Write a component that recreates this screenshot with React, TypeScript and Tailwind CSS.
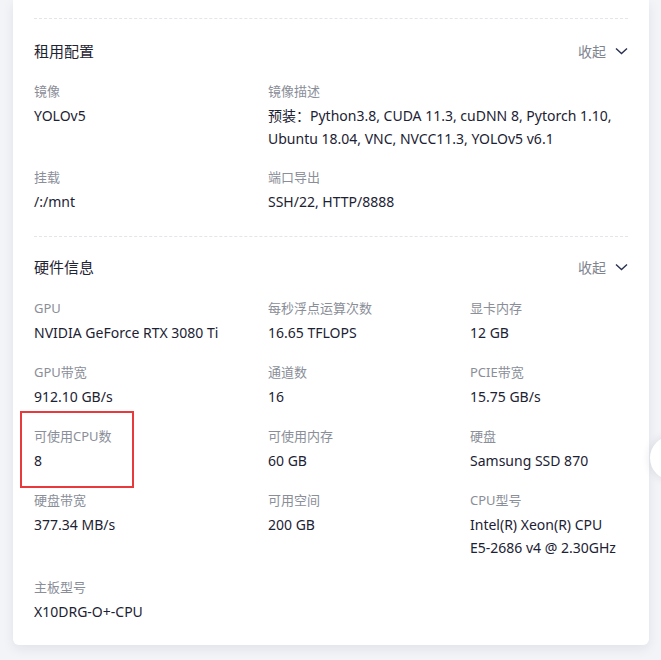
import React from "react";

type Item = { label: string; value: string[] };

const rental: Item[] = [
  { label: "镜像", value: ["YOLOv5"] },
  {
    label: "镜像描述",
    value: [
      "预装：Python3.8, CUDA 11.3, cuDNN 8, Pytorch 1.10,",
      "Ubuntu 18.04, VNC, NVCC11.3, YOLOv5 v6.1",
    ],
  },
  { label: "", value: [] },
  { label: "挂载", value: ["/:/mnt"] },
  { label: "端口导出", value: ["SSH/22, HTTP/8888"] },
  { label: "", value: [] },
];

const hardware: Item[] = [
  { label: "GPU", value: ["NVIDIA GeForce RTX 3080 Ti"] },
  { label: "每秒浮点运算次数", value: ["16.65 TFLOPS"] },
  { label: "显卡内存", value: ["12 GB"] },
  { label: "GPU带宽", value: ["912.10 GB/s"] },
  { label: "通道数", value: ["16"] },
  { label: "PCIE带宽", value: ["15.75 GB/s"] },
  { label: "可使用CPU数", value: ["8"] },
  { label: "可使用内存", value: ["60 GB"] },
  { label: "硬盘", value: ["Samsung SSD 870"] },
  { label: "硬盘带宽", value: ["377.34 MB/s"] },
  { label: "可用空间", value: ["200 GB"] },
  { label: "CPU型号", value: ["Intel(R) Xeon(R) CPU", "E5-2686 v4 @ 2.30GHz"] },
  { label: "主板型号", value: ["X10DRG-O+-CPU"] },
];

function Chevron() {
  return (
    <svg width="13" height="8" viewBox="0 0 13 8" fill="none" className="ml-[9px]">
      <path d="M1 1.5 L6.5 6.5 L12 1.5" stroke="#2a3150" strokeWidth="1.4" />
    </svg>
  );
}

function Header({ title }: { title: string }) {
  return (
    <div className="flex items-center justify-between h-[22px]">
      <span className="text-[15px] text-[#1f2433]">{title}</span>
      <span className="flex items-center text-[14px] text-[#80848f]">
        收起
        <Chevron />
      </span>
    </div>
  );
}

function Grid({ items, gap, mt }: { items: Item[]; gap: string; mt: string }) {
  return (
    <div className={`grid grid-cols-[234px_202px_1fr] ${gap} ${mt}`}>
      {items.map((it, i) =>
        it.label === "" ? (
          <div key={i} />
        ) : (
          <div key={i} className="flex flex-col">
            <span className="text-[13px] leading-[20px] text-[#8a8e98]">{it.label}</span>
            <div className="mt-[3px]">
              {it.value.map((v, j) => (
                <div key={j} className="text-[14px] leading-[23px] text-[#1c2233] whitespace-nowrap">
                  {v}
                </div>
              ))}
            </div>
          </div>
        )
      )}
    </div>
  );
}

export default function App() {
  return (
    <div
      className="relative w-[661px] h-[660px] overflow-hidden bg-[#f3f4f8]"
      style={{ fontFamily: '"Noto Sans", "Noto Sans CJK SC", sans-serif' }}
    >
      <div className="ml-[13px] mr-[12px] bg-white rounded-b-[6px] shadow-[0_4px_12px_rgba(20,30,60,0.08)] px-[21px] pt-[18px] pb-[22px]">
        <div className="border-t border-dashed border-[#e3e5ec]" />
        <div className="pt-[21px] pb-[23px]">
          <Header title="租用配置" />
          <Grid items={rental} gap="gap-y-[17px]" mt="mt-[19px]" />
        </div>
        <div className="border-t border-dashed border-[#e3e5ec]" />
        <div className="pt-[19px] relative">
          <Header title="硬件信息" />
          <Grid items={hardware} gap="gap-y-[18px]" mt="mt-[20px]" />
          <div className="absolute left-[-14px] top-[174px] w-[114px] h-[77px] border-2 border-[#e8393c]" />
        </div>
      </div>
      <div className="absolute left-[650px] top-[436px] w-[44px] h-[44px] rounded-full bg-white shadow-[0_0_10px_rgba(20,30,60,0.12)]" />
    </div>
  );
}
